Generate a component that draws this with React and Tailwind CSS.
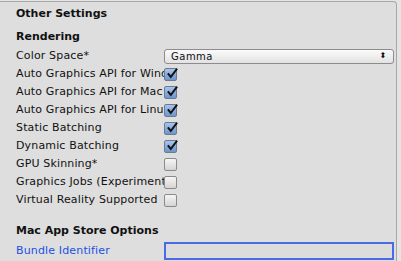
import React from "react";

const Check = () => (
  <svg width="12" height="12" viewBox="0 0 12 12" className="absolute left-[1px] top-[-1px]">
    <path d="M2.5 6.2 L4.8 9 L10.5 1.5" fill="none" stroke="#111" strokeWidth="2" strokeLinecap="square" />
  </svg>
);

const Box = ({ checked }) => (
  <div
    className={
      "relative w-[13px] h-[13px] shrink-0 rounded-[2px] border " +
      (checked
        ? "border-[#6a7a90] bg-gradient-to-b from-[#a9c4ea] to-[#6d95cc]"
        : "border-[#8a8a8a] bg-gradient-to-b from-[#f6f6f6] to-[#d4d4d4]")
    }
  >
    {checked && <Check />}
  </div>
);

export default function App() {
  const rows = [
    ["Auto Graphics API for Windows", true],
    ["Auto Graphics API for Mac", true],
    ["Auto Graphics API for Linux", true],
    ["Static Batching", true],
    ["Dynamic Batching", true],
    ["GPU Skinning*", false],
    ["Graphics Jobs (Experimental)", false],
    ["Virtual Reality Supported", false],
  ];
  return (
    <div
      className="w-[401px] h-[261px] overflow-hidden bg-[#e4e4e4] text-[11px]"
      style={{ fontFamily: '"DejaVu Sans", Verdana, sans-serif' }}
    >
      <div className="w-[397px] h-[262px] mt-[1px] bg-[#dedede] border-t border-r border-[#a8a8a8] rounded-tr-[4px]">
        <div className="h-[25px] flex items-center pl-[16px] font-bold text-[#111]">Other Settings</div>
        <div className="h-[20px] flex items-center pl-[16px] font-bold text-[#111]">Rendering</div>
        <div className="flex items-center h-[18px]">
          <div className="w-[164px] pl-[16px] box-border shrink-0 overflow-hidden whitespace-nowrap text-[#111] tracking-[0.15px]">
            Color Space*
          </div>
          <div className="w-[230px] h-[15px] rounded-[3px] border border-[#8c8c8c] bg-gradient-to-b from-[#fbfbfb] to-[#e2e2e2] flex items-center justify-between px-[6px] text-[10px] text-[#111] tracking-[0.5px]">
            <span>Gamma</span>
            <span className="text-[8px] leading-none">⬍</span>
          </div>
        </div>
        {rows.map(([l, c]) => (
          <div key={l} className="flex items-center h-[18px]">
            <div className="w-[164px] pl-[16px] box-border shrink-0 overflow-hidden whitespace-nowrap text-[#111] tracking-[0.15px]">
              {l}
            </div>
            <Box checked={c} />
          </div>
        ))}
        <div className="h-[12px]" />
        <div className="h-[20px] flex items-center pl-[16px] font-bold text-[#111]">Mac App Store Options</div>
        <div className="flex items-center h-[20px]">
          <div className="w-[164px] pl-[16px] box-border shrink-0 whitespace-nowrap text-[#1c4fe6] tracking-[0.15px]">
            Bundle Identifier
          </div>
          <div className="w-[230px] h-[18px] border-2 border-[#4a6be6] bg-[#dcdcdc]" />
        </div>
        <div className="ml-[164px] w-[230px] h-[4px] border-t-2 border-[#555]" />
      </div>
    </div>
  );
}
